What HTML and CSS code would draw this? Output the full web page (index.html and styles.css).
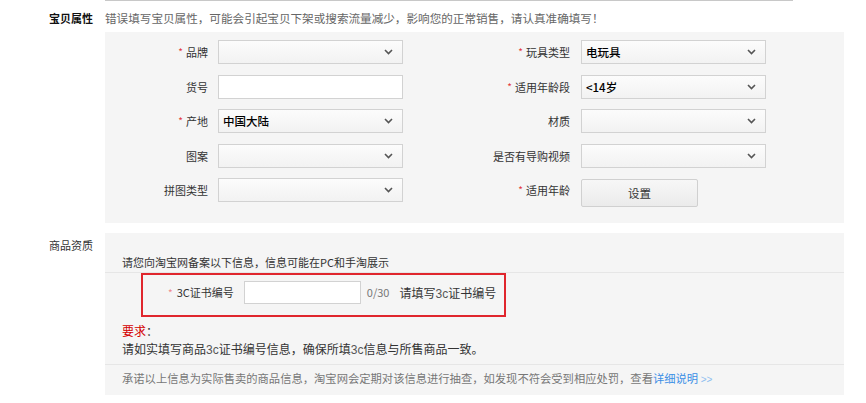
FILE: index.html
```html
<!DOCTYPE html>
<html lang="zh-CN">
<head>
<meta charset="utf-8">
<title>宝贝属性</title>
<link rel="stylesheet" href="styles.css">
</head>
<body>
<div class="page">
  <div class="topline"></div>

  <div class="section sec-attr">
    <div class="sec-label strong">宝贝属性</div>
    <div class="sec-body">
      <div class="desc">错误填写宝贝属性，可能会引起宝贝下架或搜索流量减少，影响您的正常销售，请认真准确填写！</div>
      <div class="attr-box">
        <div class="attr-grid">
          <div class="field f-left">
            <label class="lbl"><span class="req">*</span>品牌</label>
            <div class="select"><span class="val"></span><svg class="chev" width="9" height="6" viewBox="0 0 9 6"><polyline points="1,1 4.5,4.5 8,1" fill="none" stroke="#555" stroke-width="1.6"/></svg></div>
          </div>
          <div class="field f-right">
            <label class="lbl"><span class="req">*</span>玩具类型</label>
            <div class="select"><span class="val">电玩具</span><svg class="chev" width="9" height="6" viewBox="0 0 9 6"><polyline points="1,1 4.5,4.5 8,1" fill="none" stroke="#555" stroke-width="1.6"/></svg></div>
          </div>

          <div class="field f-left">
            <label class="lbl">货号</label>
            <div class="input"></div>
          </div>
          <div class="field f-right">
            <label class="lbl"><span class="req">*</span>适用年龄段</label>
            <div class="select"><span class="val">&lt;14岁</span><svg class="chev" width="9" height="6" viewBox="0 0 9 6"><polyline points="1,1 4.5,4.5 8,1" fill="none" stroke="#555" stroke-width="1.6"/></svg></div>
          </div>

          <div class="field f-left">
            <label class="lbl"><span class="req">*</span>产地</label>
            <div class="select"><span class="val">中国大陆</span><svg class="chev" width="9" height="6" viewBox="0 0 9 6"><polyline points="1,1 4.5,4.5 8,1" fill="none" stroke="#555" stroke-width="1.6"/></svg></div>
          </div>
          <div class="field f-right">
            <label class="lbl">材质</label>
            <div class="select"><span class="val"></span><svg class="chev" width="9" height="6" viewBox="0 0 9 6"><polyline points="1,1 4.5,4.5 8,1" fill="none" stroke="#555" stroke-width="1.6"/></svg></div>
          </div>

          <div class="field f-left">
            <label class="lbl">图案</label>
            <div class="select"><span class="val"></span><svg class="chev" width="9" height="6" viewBox="0 0 9 6"><polyline points="1,1 4.5,4.5 8,1" fill="none" stroke="#555" stroke-width="1.6"/></svg></div>
          </div>
          <div class="field f-right">
            <label class="lbl">是否有导购视频</label>
            <div class="select"><span class="val"></span><svg class="chev" width="9" height="6" viewBox="0 0 9 6"><polyline points="1,1 4.5,4.5 8,1" fill="none" stroke="#555" stroke-width="1.6"/></svg></div>
          </div>

          <div class="field f-left">
            <label class="lbl">拼图类型</label>
            <div class="select"><span class="val"></span><svg class="chev" width="9" height="6" viewBox="0 0 9 6"><polyline points="1,1 4.5,4.5 8,1" fill="none" stroke="#555" stroke-width="1.6"/></svg></div>
          </div>
          <div class="field f-right field-btn">
            <label class="lbl"><span class="req">*</span>适用年龄</label>
            <button class="btn" type="button">设置</button>
          </div>
        </div>
      </div>
    </div>
  </div>

  <div class="section sec-qual">
    <div class="sec-label">商品资质</div>
    <div class="sec-body">
      <div class="qual-box">
        <div class="qual-title">请您向淘宝网备案以下信息，信息可能在PC和手淘展示</div>
        <div class="qual-main">
          <div class="cert-row">
            <span class="req light">*</span>
            <span class="cert-lbl">3C证书编号</span>
            <div class="input cert-input"></div>
            <span class="count">0/30</span>
            <span class="hint">请填写<span class="thin">3c</span>证书编号</span>
          </div>
          <div class="req-title">要求<span class="colon">：</span></div>
          <div class="req-text">请如实填写商品<span class="thin">3c</span>证书编号信息，确保所填<span class="thin">3c</span>信息与所售商品一致。</div>
        </div>
        <div class="promise">承诺以上信息为实际售卖的商品信息，淘宝网会定期对该信息进行抽查，如发现不符会受到相应处罚，查看<a class="link" href="#">详细说明 <span class="gt">&gt;&gt;</span></a></div>
      </div>
    </div>
  </div>
</div>
</body>
</html>
```

FILE: styles.css
```css
* {
  box-sizing: border-box;
}

html, body {
  margin: 0;
  padding: 0;
  background: #fff;
}

body {
  font-family: "Noto Sans CJK SC", "Microsoft YaHei", "Liberation Sans", sans-serif;
  font-size: 12px;
  color: #333;
  line-height: 18px;
}

.page {
  width: 866px;
}

.topline {
  margin-left: 105px;
  width: 688px;
  height: 1px;
  background: #c8c8c8;
}

.section {
  display: flex;
}

.sec-label {
  width: 105px;
  flex: none;
  text-align: right;
  padding-right: 12px;
  color: #333;
  font-size: 11px;
}

.sec-label.strong {
  color: #111;
  font-weight: bold;
  font-size: 11px;
}

.sec-body {
  width: 739px;
}

/* ---------- 宝贝属性 ---------- */
.sec-attr .sec-label {
  padding-top: 7px;
  line-height: 20px;
}

.desc {
  padding-top: 7px;
  line-height: 20px;
  color: #666;
  font-size: 11.6px;
  white-space: nowrap;
}

.attr-box {
  margin-top: 4px;
  background: #f5f5f5;
  padding: 8px 0 21px 0;
}

.attr-grid {
  display: grid;
  grid-template-columns: 298px 363px;
  grid-auto-rows: 24px;
  row-gap: 10.5px;
}

.field {
  display: flex;
  align-items: center;
  height: 24px;
}

.lbl {
  flex: none;
  text-align: right;
  color: #333;
  font-size: 11px;
  white-space: nowrap;
}

.f-left .lbl {
  width: 113px;
  padding-right: 10px;
}

.f-right .lbl {
  width: 178px;
  padding-right: 11px;
}

.req {
  color: #e4393c;
  font-size: 10px;
  margin-right: 3px;
  vertical-align: top;
}

.req.light {
  color: #f08a8c;
}

.select {
  width: 185px;
  height: 24px;
  border: 1px solid #d2d2d2;
  background: linear-gradient(#fcfcfc, #f2f2f2);
  display: flex;
  align-items: center;
  justify-content: space-between;
  padding: 0 9px 0 4px;
}

.val {
  color: #000;
  font-weight: 500;
  font-size: 11.5px;
}

.chev {
  display: block;
}

.input {
  width: 185px;
  height: 24px;
  border: 1px solid #d2d2d2;
  background: #fff;
}

.field-btn {
  align-items: flex-start;
}

.field-btn .lbl {
  line-height: 24px;
}

.btn {
  margin-top: 1px;
  width: 117px;
  height: 28px;
  border: 1px solid #d0d0d0;
  border-radius: 2px;
  background: linear-gradient(#f7f7f7, #ebebeb);
  font-family: inherit;
  font-size: 11.5px;
  color: #333;
  padding: 0;
}

/* ---------- 商品资质 ---------- */
.sec-qual {
  margin-top: 10px;
}

.sec-qual .sec-label {
  padding-top: 2px;
  line-height: 20px;
}

.qual-box {
  background: #f5f5f5;
  padding-top: 20px;
  padding-bottom: 6px;
}

.qual-title {
  padding-left: 17px;
  line-height: 18px;
  font-size: 11px;
  color: #333;
  border-bottom: 1px solid #e6e6e6;
  padding-bottom: 1px;
}

.qual-main {
  padding-left: 17px;
  border-bottom: 1px solid #e6e6e6;
  padding-bottom: 5px;
}

.cert-row {
  margin-left: 19px;
  width: 365px;
  height: 44px;
  border: 2px solid #e0262d;
  display: flex;
  align-items: flex-start;
  padding: 6px 0 0 25px;
}

.cert-row .req {
  margin-right: 4px;
  line-height: 23px;
}

.cert-lbl {
  line-height: 23px;
  font-size: 11px;
  color: #333;
  margin-right: 10px;
}

.cert-input {
  width: 117px;
  height: 23px;
}

.count {
  line-height: 23px;
  font-size: 11px;
  color: #777;
  margin-left: 6px;
  margin-right: 10px;
}

.hint {
  line-height: 23px;
  color: #333;
}

.thin {
  font-family: "Liberation Sans", sans-serif;
  color: #555;
}

.req-title {
  margin-top: 5px;
  color: #d40000;
  line-height: 18px;
}

.colon {
  color: #333;
}

.req-text {
  line-height: 18px;
  color: #333;
}

.promise {
  padding: 4px 0 0 17px;
  line-height: 18px;
  font-size: 11.3px;
  color: #777;
  white-space: nowrap;
}

.link {
  color: #3a8ee6;
  text-decoration: none;
}

.gt {
  color: #8fbff0;
  font-family: "Liberation Sans", sans-serif;
  font-size: 10px;
}
```
